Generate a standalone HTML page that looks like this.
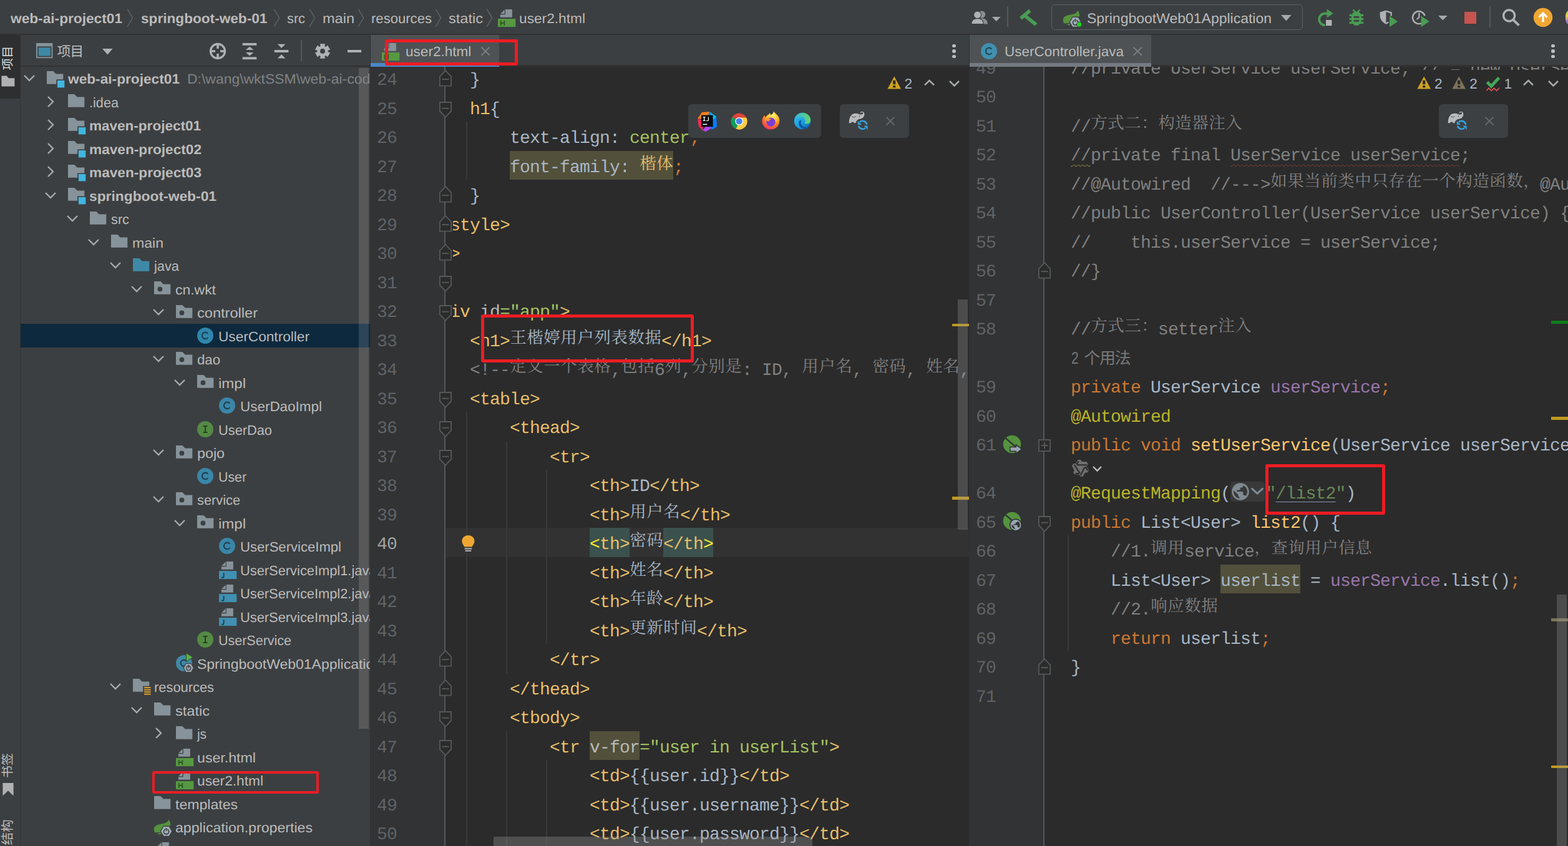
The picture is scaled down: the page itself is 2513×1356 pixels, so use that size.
<!DOCTYPE html>
<html><head><meta charset="utf-8"><title>IDE</title><style>
html,body{margin:0;padding:0;background:#3c3f41;}
body{width:2513px;height:1356px;overflow:hidden;position:relative;font-family:"Liberation Sans","Noto Sans CJK SC",sans-serif;text-rendering:geometricPrecision;}
#r{position:absolute;left:0;top:0;width:2513px;height:1356px;overflow:hidden;}
#r div{position:absolute;}
#r svg{position:absolute;overflow:visible;}
.ui{white-space:pre;line-height:30px;height:30px;transform-origin:0 50%;font-family:"Liberation Sans","Noto Sans CJK SC",sans-serif;}
.cj,.cu{display:inline-block;position:relative;vertical-align:top;letter-spacing:0;}
.cj{font-family:"Liberation Mono","Noto Serif CJK SC",serif;font-size:26.5px;line-height:45px;text-align:center;}
.cu{font-family:"Liberation Sans","Noto Sans CJK SC",sans-serif;text-align:center;}
.code{white-space:pre;font-family:"Liberation Mono","Noto Serif CJK SC",monospace;font-size:28px;letter-spacing:-0.803px;line-height:56.3px;height:46.5px;color:#a9b7c6;}
.code .cj{width:27px;height:46.5px;}
.ln{white-space:pre;font-family:"Liberation Mono",monospace;font-size:28px;letter-spacing:-0.803px;line-height:56.3px;height:46.5px;color:#606366;}
.clip{overflow:hidden;}
.hl{display:inline-block;height:46.5px;vertical-align:top;background:#52503a}
.mt{display:inline-block;height:46.5px;vertical-align:top;background:#3b514d;color:#e8bf6a}
.y{color:#ffef28}
.wy{text-decoration:underline wavy #a09a4e;text-decoration-thickness:1px;text-underline-offset:6px}
.wr{text-decoration:underline wavy #8a3a38;text-decoration-thickness:1px;text-underline-offset:6px}
.ul{text-decoration:underline;text-decoration-color:#8a93b5;text-decoration-thickness:1.3px;text-underline-offset:5px}
.inl{display:inline-block;width:56.6px;height:46.5px;vertical-align:top}
.t{color:#e8bf6a}.k{color:#cc7832}.s{color:#a5c261}.c{color:#808080}.a{color:#bbb529}.f{color:#9876aa}.m{color:#ffc66d}.n{color:#bababa}.js{color:#6a8759}
</style></head><body><div id="r">
<div style="left:0px;top:0px;width:2513px;height:1356px;background:#3c3f41;"></div>
<div style="left:0px;top:54px;width:2513px;height:2px;background:#323232;"></div>
<div style="left:0px;top:56px;width:33px;height:1300px;background:#3c3f41;"></div>
<div style="left:32px;top:56px;width:1px;height:1300px;background:#323232;"></div>
<div style="left:33px;top:105px;width:560px;height:2px;background:#2f3133;"></div>
<div style="left:33px;top:519.0px;width:560px;height:37.5px;background:#0d293e;"></div>
<div class="clip" style="left:33px;top:106px;width:560px;height:1250px;">
<div style="left:542.00px;top:3.00px;width:16px;height:1058.6px;background:rgba(255,255,255,0.135);"></div>
<svg style="left:4.00px;top:13.10px;" width="20" height="13" viewBox="0 0 20 13"><path d="M2,2 L10.0,10 L18,2" fill="none" stroke="#a9acae" stroke-width="2.3"/></svg>
<svg style="left:41.70px;top:7.70px;" width="32" height="32" viewBox="0 0 32 32"><path d="M0,0 L10.3,0 L14.6,4.4 L26.3,4.4 L26.3,20.7 L0,20.7 Z" fill="#87939a"/><rect x="15.2" y="13.4" width="14" height="14" fill="#3c3f41"/><rect x="16.9" y="15" width="11.4" height="11.4" fill="#40b6e0"/></svg>
<div id="t1" class="ui" style="left:76.00px;top:6.48px;color:#bbbbbb;font-size:22px;font-weight:bold;transform:scaleX(1.0311);">web-ai-project01</div>
<div id="t2" class="ui" style="left:267.00px;top:6.48px;color:#7f8386;font-size:22px;transform:scaleX(1.0428);">D:\wang\wktSSM\web-ai-code</div>
<svg style="left:42.00px;top:46.60px;" width="13" height="20" viewBox="0 0 13 20"><path d="M2,2 L10,10.0 L2,18" fill="none" stroke="#a9acae" stroke-width="2.3"/></svg>
<svg style="left:75.70px;top:45.20px;" width="30" height="30" viewBox="0 0 30 30"><path d="M0,0 L10.3,0 L14.6,4.4 L26.3,4.4 L26.3,20.7 L0,20.7 Z" fill="#87939a"/></svg>
<div id="t3" class="ui" style="left:110.00px;top:43.98px;color:#bbbbbb;font-size:22px;transform:scaleX(0.9849);">.idea</div>
<svg style="left:42.00px;top:84.10px;" width="13" height="20" viewBox="0 0 13 20"><path d="M2,2 L10,10.0 L2,18" fill="none" stroke="#a9acae" stroke-width="2.3"/></svg>
<svg style="left:75.70px;top:82.70px;" width="32" height="32" viewBox="0 0 32 32"><path d="M0,0 L10.3,0 L14.6,4.4 L26.3,4.4 L26.3,20.7 L0,20.7 Z" fill="#87939a"/><rect x="15.2" y="13.4" width="14" height="14" fill="#3c3f41"/><rect x="16.9" y="15" width="11.4" height="11.4" fill="#40b6e0"/></svg>
<div id="t4" class="ui" style="left:110.00px;top:81.48px;color:#bbbbbb;font-size:22px;font-weight:bold;transform:scaleX(1.0237);">maven-project01</div>
<svg style="left:42.00px;top:121.60px;" width="13" height="20" viewBox="0 0 13 20"><path d="M2,2 L10,10.0 L2,18" fill="none" stroke="#a9acae" stroke-width="2.3"/></svg>
<svg style="left:75.70px;top:120.20px;" width="32" height="32" viewBox="0 0 32 32"><path d="M0,0 L10.3,0 L14.6,4.4 L26.3,4.4 L26.3,20.7 L0,20.7 Z" fill="#87939a"/><rect x="15.2" y="13.4" width="14" height="14" fill="#3c3f41"/><rect x="16.9" y="15" width="11.4" height="11.4" fill="#40b6e0"/></svg>
<div id="t5" class="ui" style="left:110.00px;top:118.98px;color:#bbbbbb;font-size:22px;font-weight:bold;transform:scaleX(1.0294);">maven-project02</div>
<svg style="left:42.00px;top:159.10px;" width="13" height="20" viewBox="0 0 13 20"><path d="M2,2 L10,10.0 L2,18" fill="none" stroke="#a9acae" stroke-width="2.3"/></svg>
<svg style="left:75.70px;top:157.70px;" width="32" height="32" viewBox="0 0 32 32"><path d="M0,0 L10.3,0 L14.6,4.4 L26.3,4.4 L26.3,20.7 L0,20.7 Z" fill="#87939a"/><rect x="15.2" y="13.4" width="14" height="14" fill="#3c3f41"/><rect x="16.9" y="15" width="11.4" height="11.4" fill="#40b6e0"/></svg>
<div id="t6" class="ui" style="left:110.00px;top:156.48px;color:#bbbbbb;font-size:22px;font-weight:bold;transform:scaleX(1.0294);">maven-project03</div>
<svg style="left:38.00px;top:200.60px;" width="20" height="13" viewBox="0 0 20 13"><path d="M2,2 L10.0,10 L18,2" fill="none" stroke="#a9acae" stroke-width="2.3"/></svg>
<svg style="left:75.70px;top:195.20px;" width="32" height="32" viewBox="0 0 32 32"><path d="M0,0 L10.3,0 L14.6,4.4 L26.3,4.4 L26.3,20.7 L0,20.7 Z" fill="#87939a"/><rect x="15.2" y="13.4" width="14" height="14" fill="#3c3f41"/><rect x="16.9" y="15" width="11.4" height="11.4" fill="#40b6e0"/></svg>
<div id="t7" class="ui" style="left:110.00px;top:193.98px;color:#bbbbbb;font-size:22px;font-weight:bold;transform:scaleX(1.0367);">springboot-web-01</div>
<svg style="left:73.00px;top:238.10px;" width="20" height="13" viewBox="0 0 20 13"><path d="M2,2 L10.0,10 L18,2" fill="none" stroke="#a9acae" stroke-width="2.3"/></svg>
<svg style="left:110.70px;top:232.70px;" width="30" height="30" viewBox="0 0 30 30"><path d="M0,0 L10.3,0 L14.6,4.4 L26.3,4.4 L26.3,20.7 L0,20.7 Z" fill="#87939a"/></svg>
<div id="t8" class="ui" style="left:145.00px;top:231.48px;color:#bbbbbb;font-size:22px;transform:scaleX(0.9888);">src</div>
<svg style="left:107.00px;top:275.60px;" width="20" height="13" viewBox="0 0 20 13"><path d="M2,2 L10.0,10 L18,2" fill="none" stroke="#a9acae" stroke-width="2.3"/></svg>
<svg style="left:144.70px;top:270.20px;" width="30" height="30" viewBox="0 0 30 30"><path d="M0,0 L10.3,0 L14.6,4.4 L26.3,4.4 L26.3,20.7 L0,20.7 Z" fill="#87939a"/></svg>
<div id="t9" class="ui" style="left:179.00px;top:268.98px;color:#bbbbbb;font-size:22px;transform:scaleX(1.0485);">main</div>
<svg style="left:142.00px;top:313.10px;" width="20" height="13" viewBox="0 0 20 13"><path d="M2,2 L10.0,10 L18,2" fill="none" stroke="#a9acae" stroke-width="2.3"/></svg>
<svg style="left:179.70px;top:307.70px;" width="30" height="30" viewBox="0 0 30 30"><path d="M0,0 L10.3,0 L14.6,4.4 L26.3,4.4 L26.3,20.7 L0,20.7 Z" fill="#3e89a6"/></svg>
<div id="t10" class="ui" style="left:214.00px;top:306.48px;color:#bbbbbb;font-size:22px;transform:scaleX(0.9911);">java</div>
<svg style="left:176.00px;top:350.60px;" width="20" height="13" viewBox="0 0 20 13"><path d="M2,2 L10.0,10 L18,2" fill="none" stroke="#a9acae" stroke-width="2.3"/></svg>
<svg style="left:213.70px;top:345.20px;" width="30" height="30" viewBox="0 0 30 30"><path d="M0,0 L10.3,0 L14.6,4.4 L26.3,4.4 L26.3,20.7 L0,20.7 Z" fill="#87939a"/><circle cx="9.4" cy="12.4" r="3.9" fill="#3c3f41"/></svg>
<div id="t11" class="ui" style="left:248.00px;top:343.98px;color:#bbbbbb;font-size:22px;transform:scaleX(1.0423);">cn.wkt</div>
<svg style="left:211.00px;top:388.10px;" width="20" height="13" viewBox="0 0 20 13"><path d="M2,2 L10.0,10 L18,2" fill="none" stroke="#a9acae" stroke-width="2.3"/></svg>
<svg style="left:248.70px;top:382.70px;" width="30" height="30" viewBox="0 0 30 30"><path d="M0,0 L10.3,0 L14.6,4.4 L26.3,4.4 L26.3,20.7 L0,20.7 Z" fill="#87939a"/><circle cx="9.4" cy="12.4" r="3.9" fill="#3c3f41"/></svg>
<div id="t12" class="ui" style="left:283.00px;top:381.48px;color:#bbbbbb;font-size:22px;transform:scaleX(1.0720);">controller</div>
<svg style="left:281.90px;top:417.90px;" width="28" height="28" viewBox="0 0 28 28"><circle cx="14" cy="14" r="13" fill="#2f86ab"/><path d="M18.3,17.2 A5.3,5.3 0 1 1 18.3,10.6" fill="none" stroke="#1f3f4f" stroke-width="2.1"/></svg>
<div id="t13" class="ui" style="left:317.00px;top:418.98px;color:#bbbbbb;font-size:22px;transform:scaleX(1.0294);">UserController</div>
<svg style="left:211.00px;top:463.10px;" width="20" height="13" viewBox="0 0 20 13"><path d="M2,2 L10.0,10 L18,2" fill="none" stroke="#a9acae" stroke-width="2.3"/></svg>
<svg style="left:248.70px;top:457.70px;" width="30" height="30" viewBox="0 0 30 30"><path d="M0,0 L10.3,0 L14.6,4.4 L26.3,4.4 L26.3,20.7 L0,20.7 Z" fill="#87939a"/><circle cx="9.4" cy="12.4" r="3.9" fill="#3c3f41"/></svg>
<div id="t14" class="ui" style="left:283.00px;top:456.48px;color:#bbbbbb;font-size:22px;transform:scaleX(1.0077);">dao</div>
<svg style="left:245.00px;top:500.60px;" width="20" height="13" viewBox="0 0 20 13"><path d="M2,2 L10.0,10 L18,2" fill="none" stroke="#a9acae" stroke-width="2.3"/></svg>
<svg style="left:282.70px;top:495.20px;" width="30" height="30" viewBox="0 0 30 30"><path d="M0,0 L10.3,0 L14.6,4.4 L26.3,4.4 L26.3,20.7 L0,20.7 Z" fill="#87939a"/><circle cx="9.4" cy="12.4" r="3.9" fill="#3c3f41"/></svg>
<div id="t15" class="ui" style="left:317.00px;top:493.98px;color:#bbbbbb;font-size:22px;transform:scaleX(1.0906);">impl</div>
<svg style="left:316.90px;top:530.40px;" width="28" height="28" viewBox="0 0 28 28"><circle cx="14" cy="14" r="13" fill="#3a86a8"/><path d="M18.3,17.2 A5.3,5.3 0 1 1 18.3,10.6" fill="none" stroke="#1f3f4f" stroke-width="2.1"/></svg>
<div id="t16" class="ui" style="left:352.00px;top:531.48px;color:#bbbbbb;font-size:22px;transform:scaleX(1.0204);">UserDaoImpl</div>
<svg style="left:281.90px;top:567.90px;" width="28" height="28" viewBox="0 0 28 28"><circle cx="14" cy="14" r="13" fill="#548a45"/><path d="M10.6,9 H17.4 M10.6,19 H17.4 M14,9 V19" fill="none" stroke="#27421f" stroke-width="2"/></svg>
<div id="t17" class="ui" style="left:317.00px;top:568.98px;color:#bbbbbb;font-size:22px;transform:scaleX(0.9906);">UserDao</div>
<svg style="left:211.00px;top:613.10px;" width="20" height="13" viewBox="0 0 20 13"><path d="M2,2 L10.0,10 L18,2" fill="none" stroke="#a9acae" stroke-width="2.3"/></svg>
<svg style="left:248.70px;top:607.70px;" width="30" height="30" viewBox="0 0 30 30"><path d="M0,0 L10.3,0 L14.6,4.4 L26.3,4.4 L26.3,20.7 L0,20.7 Z" fill="#87939a"/><circle cx="9.4" cy="12.4" r="3.9" fill="#3c3f41"/></svg>
<div id="t18" class="ui" style="left:283.00px;top:606.48px;color:#bbbbbb;font-size:22px;transform:scaleX(1.0579);">pojo</div>
<svg style="left:281.90px;top:642.90px;" width="28" height="28" viewBox="0 0 28 28"><circle cx="14" cy="14" r="13" fill="#3a86a8"/><path d="M18.3,17.2 A5.3,5.3 0 1 1 18.3,10.6" fill="none" stroke="#1f3f4f" stroke-width="2.1"/></svg>
<div id="t19" class="ui" style="left:317.00px;top:643.98px;color:#bbbbbb;font-size:22px;transform:scaleX(0.9687);">User</div>
<svg style="left:211.00px;top:688.10px;" width="20" height="13" viewBox="0 0 20 13"><path d="M2,2 L10.0,10 L18,2" fill="none" stroke="#a9acae" stroke-width="2.3"/></svg>
<svg style="left:248.70px;top:682.70px;" width="30" height="30" viewBox="0 0 30 30"><path d="M0,0 L10.3,0 L14.6,4.4 L26.3,4.4 L26.3,20.7 L0,20.7 Z" fill="#87939a"/><circle cx="9.4" cy="12.4" r="3.9" fill="#3c3f41"/></svg>
<div id="t20" class="ui" style="left:283.00px;top:681.48px;color:#bbbbbb;font-size:22px;transform:scaleX(0.9901);">service</div>
<svg style="left:245.00px;top:725.60px;" width="20" height="13" viewBox="0 0 20 13"><path d="M2,2 L10.0,10 L18,2" fill="none" stroke="#a9acae" stroke-width="2.3"/></svg>
<svg style="left:282.70px;top:720.20px;" width="30" height="30" viewBox="0 0 30 30"><path d="M0,0 L10.3,0 L14.6,4.4 L26.3,4.4 L26.3,20.7 L0,20.7 Z" fill="#87939a"/><circle cx="9.4" cy="12.4" r="3.9" fill="#3c3f41"/></svg>
<div id="t21" class="ui" style="left:317.00px;top:718.98px;color:#bbbbbb;font-size:22px;transform:scaleX(1.0906);">impl</div>
<svg style="left:316.90px;top:755.40px;" width="28" height="28" viewBox="0 0 28 28"><circle cx="14" cy="14" r="13" fill="#3a86a8"/><path d="M18.3,17.2 A5.3,5.3 0 1 1 18.3,10.6" fill="none" stroke="#1f3f4f" stroke-width="2.1"/></svg>
<div id="t22" class="ui" style="left:352.00px;top:756.48px;color:#bbbbbb;font-size:22px;transform:scaleX(1.0039);">UserServiceImpl</div>
<svg style="left:318.10px;top:793.60px;" width="30" height="30" viewBox="0 0 30 30"><path d="M11.8,0 H22.8 V12.8 H3.8 V8.3 H11.8 Z" fill="#87939a"/><path d="M4.1,7 L10.6,0.5 V7 Z" fill="#87939a"/><rect x="0" y="15.1" width="28.3" height="13" fill="#4090b2"/><path d="M7.6,18.3 V23.6 Q7.6,26 5.6,26 Q4.5,26 4.1,25.2" fill="none" stroke="#1d3f4f" stroke-width="1.9"/></svg>
<div id="t23" class="ui" style="left:352.00px;top:793.98px;color:#bbbbbb;font-size:22px;transform:scaleX(0.9928);">UserServiceImpl1.java</div>
<svg style="left:318.10px;top:831.10px;" width="30" height="30" viewBox="0 0 30 30"><path d="M11.8,0 H22.8 V12.8 H3.8 V8.3 H11.8 Z" fill="#87939a"/><path d="M4.1,7 L10.6,0.5 V7 Z" fill="#87939a"/><rect x="0" y="15.1" width="28.3" height="13" fill="#4090b2"/><path d="M7.6,18.3 V23.6 Q7.6,26 5.6,26 Q4.5,26 4.1,25.2" fill="none" stroke="#1d3f4f" stroke-width="1.9"/></svg>
<div id="t24" class="ui" style="left:352.00px;top:831.48px;color:#bbbbbb;font-size:22px;transform:scaleX(0.9928);">UserServiceImpl2.java</div>
<svg style="left:318.10px;top:868.60px;" width="30" height="30" viewBox="0 0 30 30"><path d="M11.8,0 H22.8 V12.8 H3.8 V8.3 H11.8 Z" fill="#87939a"/><path d="M4.1,7 L10.6,0.5 V7 Z" fill="#87939a"/><rect x="0" y="15.1" width="28.3" height="13" fill="#4090b2"/><path d="M7.6,18.3 V23.6 Q7.6,26 5.6,26 Q4.5,26 4.1,25.2" fill="none" stroke="#1d3f4f" stroke-width="1.9"/></svg>
<div id="t25" class="ui" style="left:352.00px;top:868.98px;color:#bbbbbb;font-size:22px;transform:scaleX(0.9928);">UserServiceImpl3.java</div>
<svg style="left:281.90px;top:905.40px;" width="28" height="28" viewBox="0 0 28 28"><circle cx="14" cy="14" r="13" fill="#548a45"/><path d="M10.6,9 H17.4 M10.6,19 H17.4 M14,9 V19" fill="none" stroke="#27421f" stroke-width="2"/></svg>
<div id="t26" class="ui" style="left:317.00px;top:906.48px;color:#bbbbbb;font-size:22px;transform:scaleX(0.9765);">UserService</div>
<svg style="left:246.10px;top:939.20px;" width="40" height="40" viewBox="0 0 40 40"><circle cx="16" cy="18" r="13" fill="#3f89a8"/><path d="M19.5,21 A5,5 0 1 1 19.5,14.6" fill="none" stroke="#1f3f4f" stroke-width="2"/><path d="M19.4,1.6 L30.2,8.6 L19.4,15.4 Z" fill="#59b33c" stroke="#3c3f41" stroke-width="1"/><polygon points="31.4,25.6 27.3,32.7 19.1,32.7 15.0,25.6 19.1,18.5 27.3,18.5" fill="#9aa7b0" stroke="#3c3f41" stroke-width="1.2"/><circle cx="23.2" cy="26.0" r="3.4" fill="none" stroke="#3c3f41" stroke-width="1.5"/><rect x="22.4" y="20.5" width="1.6" height="4.9" fill="#3c3f41"/></svg>
<div id="t27" class="ui" style="left:283.00px;top:943.98px;color:#bbbbbb;font-size:22px;transform:scaleX(1.0446);">SpringbootWeb01Application</div>
<svg style="left:142.00px;top:988.10px;" width="20" height="13" viewBox="0 0 20 13"><path d="M2,2 L10.0,10 L18,2" fill="none" stroke="#a9acae" stroke-width="2.3"/></svg>
<svg style="left:179.70px;top:981.70px;" width="32" height="32" viewBox="0 0 32 32"><path d="M0,0 L10.3,0 L14.6,4.4 L26.3,4.4 L26.3,20.7 L0,20.7 Z" fill="#87939a"/><rect x="16.2" y="11.6" width="14" height="16" fill="#3c3f41"/><rect x="18" y="13.2" width="10.6" height="1.9" fill="#e2a52e"/><rect x="18" y="16.7" width="10.6" height="1.9" fill="#e2a52e"/><rect x="18" y="20.2" width="10.6" height="1.9" fill="#e2a52e"/><rect x="18" y="23.7" width="10.6" height="1.9" fill="#e2a52e"/></svg>
<div id="t28" class="ui" style="left:214.00px;top:981.48px;color:#bbbbbb;font-size:22px;transform:scaleX(0.9939);">resources</div>
<svg style="left:176.00px;top:1025.60px;" width="20" height="13" viewBox="0 0 20 13"><path d="M2,2 L10.0,10 L18,2" fill="none" stroke="#a9acae" stroke-width="2.3"/></svg>
<svg style="left:213.70px;top:1020.20px;" width="30" height="30" viewBox="0 0 30 30"><path d="M0,0 L10.3,0 L14.6,4.4 L26.3,4.4 L26.3,20.7 L0,20.7 Z" fill="#87939a"/></svg>
<div id="t29" class="ui" style="left:248.00px;top:1018.98px;color:#bbbbbb;font-size:22px;transform:scaleX(1.0709);">static</div>
<svg style="left:215.00px;top:1059.10px;" width="13" height="20" viewBox="0 0 13 20"><path d="M2,2 L10,10.0 L2,18" fill="none" stroke="#a9acae" stroke-width="2.3"/></svg>
<svg style="left:248.70px;top:1057.70px;" width="30" height="30" viewBox="0 0 30 30"><path d="M0,0 L10.3,0 L14.6,4.4 L26.3,4.4 L26.3,20.7 L0,20.7 Z" fill="#87939a"/></svg>
<div id="t30" class="ui" style="left:283.00px;top:1056.48px;color:#bbbbbb;font-size:22px;transform:scaleX(0.9440);">js</div>
<svg style="left:249.10px;top:1093.60px;" width="30" height="30" viewBox="0 0 30 30"><path d="M11.8,0 H22.8 V12.8 H3.8 V8.3 H11.8 Z" fill="#87939a"/><path d="M4.1,7 L10.6,0.5 V7 Z" fill="#87939a"/><rect x="0" y="15.1" width="28.3" height="13" fill="#579943"/><path d="M4.7,18 V26 M10.3,18 V26 M4.7,21.9 H10.3" fill="none" stroke="#2a5520" stroke-width="1.8"/></svg>
<div id="t31" class="ui" style="left:283.00px;top:1093.98px;color:#bbbbbb;font-size:22px;transform:scaleX(1.0530);">user.html</div>
<svg style="left:249.10px;top:1131.10px;" width="30" height="30" viewBox="0 0 30 30"><path d="M11.8,0 H22.8 V12.8 H3.8 V8.3 H11.8 Z" fill="#87939a"/><path d="M4.1,7 L10.6,0.5 V7 Z" fill="#87939a"/><rect x="0" y="15.1" width="28.3" height="13" fill="#579943"/><path d="M4.7,18 V26 M10.3,18 V26 M4.7,21.9 H10.3" fill="none" stroke="#2a5520" stroke-width="1.8"/></svg>
<div id="t32" class="ui" style="left:283.00px;top:1131.48px;color:#bbbbbb;font-size:22px;transform:scaleX(1.0319);">user2.html</div>
<svg style="left:213.70px;top:1170.20px;" width="30" height="30" viewBox="0 0 30 30"><path d="M0,0 L10.3,0 L14.6,4.4 L26.3,4.4 L26.3,20.7 L0,20.7 Z" fill="#87939a"/></svg>
<div id="t33" class="ui" style="left:248.00px;top:1168.98px;color:#bbbbbb;font-size:22px;transform:scaleX(1.0483);">templates</div>
<svg style="left:213.00px;top:1204.00px;" width="32" height="32" viewBox="0 0 32 32"><path d="M24.5,3.8 C22.5,7.5 20,9.6 13.6,10.6 C8,11.4 0.8,13 0.8,18.8 C0.8,21.4 1.4,23.2 2.6,24.6 L10.6,23.9 L18,14 L27.2,13.6 C27.4,9.4 26,6 24.5,3.8 Z" fill="#55933e"/><path d="M5.8,26.5 C8,25.6 10.4,24.9 12.4,24.7 L12.4,27 C10,27.3 8,27.1 5.8,26.5 Z" fill="#55933e"/><polygon points="29.08,22.44 24.81,29.84 16.26,29.84 11.98,22.44 16.25,15.04 24.81,15.04" fill="#a0acb6" stroke="#3c3f41" stroke-width="2.6" paint-order="stroke" stroke-linejoin="round"/><circle cx="20.53" cy="23.040000000000003" r="4.02" fill="none" stroke="#2f3133" stroke-width="1.5"/><rect x="18.93" y="16.80" width="3.2" height="5.30" fill="#a0acb6"/><rect x="19.78" y="17.14" width="1.5" height="4.79" fill="#2f3133"/></svg>
<div id="t34" class="ui" style="left:248.00px;top:1206.48px;color:#bbbbbb;font-size:22px;transform:scaleX(1.0519);">application.properties</div>
<svg style="left:214.70px;top:1243.60px;" width="30" height="30" viewBox="0 0 30 30"><path d="M11.8,0 H22.8 V12.8 H3.8 V8.3 H11.8 Z" fill="#87939a"/><path d="M4.1,7 L10.6,0.5 V7 Z" fill="#87939a"/><rect x="0" y="15.1" width="28.3" height="13" fill="#4090b2"/><path d="M7.6,18.3 V23.6 Q7.6,26 5.6,26 Q4.5,26 4.1,25.2" fill="none" stroke="#1d3f4f" stroke-width="1.9"/></svg>
</div>
<div style="left:592.8px;top:56px;width:1.2px;height:1300px;background:#2f3133;"></div>
<div style="left:594px;top:56px;width:959px;height:48px;background:#3c3f41;"></div>
<div style="left:594px;top:104.4px;width:959px;height:2.6px;background:#323232;"></div>
<div style="left:594px;top:56px;width:206.2px;height:51px;background:#4e5254;"></div>
<div style="left:594px;top:100.8px;width:206.2px;height:6.2px;background:#4a88c7;"></div>
<svg style="left:611.8px;top:68.9px;" width="30" height="30" viewBox="0 0 30 30"><path d="M11.8,0 H22.8 V12.8 H3.8 V8.3 H11.8 Z" fill="#87939a"/><path d="M4.1,7 L10.6,0.5 V7 Z" fill="#87939a"/><rect x="0" y="15.1" width="28.3" height="13" fill="#579943"/><path d="M4.7,18 V26 M10.3,18 V26 M4.7,21.9 H10.3" fill="none" stroke="#2a5520" stroke-width="1.8"/></svg>
<div id="t35" class="ui" style="left:649.6px;top:68.18px;color:#bbbbbb;font-size:22px;transform:scaleX(1.0261);">user2.html</div>
<svg style="left:770px;top:74.3px;" width="16" height="16" viewBox="0 0 16 16"><path d="M1.6,1.6 L14.6,14.6 M14.6,1.6 L1.6,14.6" stroke="#7f8486" stroke-width="1.7" fill="none"/></svg>
<div style="left:1526.1px;top:70.69999999999999px;width:5.8px;height:5.8px;background:#bdbfc0;border-radius:50%;"></div>
<div style="left:1526.1px;top:79.1px;width:5.8px;height:5.8px;background:#bdbfc0;border-radius:50%;"></div>
<div style="left:1526.1px;top:87.5px;width:5.8px;height:5.8px;background:#bdbfc0;border-radius:50%;"></div>
<div style="left:594px;top:107px;width:119px;height:1249px;background:#313335;"></div>
<div style="left:713px;top:107px;width:840px;height:1249px;background:#2b2b2b;"></div>
<div style="left:713px;top:846.0px;width:840px;height:46.5px;background:#323232;"></div>
<div class="clip" style="left:594px;top:107px;width:959px;height:1249px;">
<div class="ln" style="left:10.00px;top:-5.00px;color:#606366;">24</div>
<div class="ln" style="left:10.00px;top:41.50px;color:#606366;">25</div>
<div class="ln" style="left:10.00px;top:88.00px;color:#606366;">26</div>
<div class="ln" style="left:10.00px;top:134.50px;color:#606366;">27</div>
<div class="ln" style="left:10.00px;top:181.00px;color:#606366;">28</div>
<div class="ln" style="left:10.00px;top:227.50px;color:#606366;">29</div>
<div class="ln" style="left:10.00px;top:274.00px;color:#606366;">30</div>
<div class="ln" style="left:10.00px;top:320.50px;color:#606366;">31</div>
<div class="ln" style="left:10.00px;top:367.00px;color:#606366;">32</div>
<div class="ln" style="left:10.00px;top:413.50px;color:#606366;">33</div>
<div class="ln" style="left:10.00px;top:460.00px;color:#606366;">34</div>
<div class="ln" style="left:10.00px;top:506.50px;color:#606366;">35</div>
<div class="ln" style="left:10.00px;top:553.00px;color:#606366;">36</div>
<div class="ln" style="left:10.00px;top:599.50px;color:#606366;">37</div>
<div class="ln" style="left:10.00px;top:646.00px;color:#606366;">38</div>
<div class="ln" style="left:10.00px;top:692.50px;color:#606366;">39</div>
<div class="ln" style="left:10.00px;top:739.00px;color:#a4a3a3;">40</div>
<div class="ln" style="left:10.00px;top:785.50px;color:#606366;">41</div>
<div class="ln" style="left:10.00px;top:832.00px;color:#606366;">42</div>
<div class="ln" style="left:10.00px;top:878.50px;color:#606366;">43</div>
<div class="ln" style="left:10.00px;top:925.00px;color:#606366;">44</div>
<div class="ln" style="left:10.00px;top:971.50px;color:#606366;">45</div>
<div class="ln" style="left:10.00px;top:1018.00px;color:#606366;">46</div>
<div class="ln" style="left:10.00px;top:1064.50px;color:#606366;">47</div>
<div class="ln" style="left:10.00px;top:1111.00px;color:#606366;">48</div>
<div class="ln" style="left:10.00px;top:1157.50px;color:#606366;">49</div>
<div class="ln" style="left:10.00px;top:1204.00px;color:#606366;">50</div>
<div style="left:118.00px;top:0.00px;width:2px;height:1249px;background:#555758;"></div>
<svg style="left:109.30px;top:5.20px;" width="22" height="27" viewBox="0 0 22 27"><path d="M1.9,25.6 H20.1 V10.6 L11,1.2 L1.9,10.6 Z" fill="#2b2b2b" stroke="#555758" stroke-width="1.9"/><rect x="5.4" y="14.1" width="11.2" height="2" fill="#555758"/></svg>
<svg style="left:109.30px;top:191.20px;" width="22" height="27" viewBox="0 0 22 27"><path d="M1.9,25.6 H20.1 V10.6 L11,1.2 L1.9,10.6 Z" fill="#2b2b2b" stroke="#555758" stroke-width="1.9"/><rect x="5.4" y="14.1" width="11.2" height="2" fill="#555758"/></svg>
<svg style="left:109.30px;top:237.70px;" width="22" height="27" viewBox="0 0 22 27"><path d="M1.9,25.6 H20.1 V10.6 L11,1.2 L1.9,10.6 Z" fill="#2b2b2b" stroke="#555758" stroke-width="1.9"/><rect x="5.4" y="14.1" width="11.2" height="2" fill="#555758"/></svg>
<svg style="left:109.30px;top:284.20px;" width="22" height="27" viewBox="0 0 22 27"><path d="M1.9,25.6 H20.1 V10.6 L11,1.2 L1.9,10.6 Z" fill="#2b2b2b" stroke="#555758" stroke-width="1.9"/><rect x="5.4" y="14.1" width="11.2" height="2" fill="#555758"/></svg>
<svg style="left:109.30px;top:935.20px;" width="22" height="27" viewBox="0 0 22 27"><path d="M1.9,25.6 H20.1 V10.6 L11,1.2 L1.9,10.6 Z" fill="#2b2b2b" stroke="#555758" stroke-width="1.9"/><rect x="5.4" y="14.1" width="11.2" height="2" fill="#555758"/></svg>
<svg style="left:109.30px;top:981.70px;" width="22" height="27" viewBox="0 0 22 27"><path d="M1.9,25.6 H20.1 V10.6 L11,1.2 L1.9,10.6 Z" fill="#2b2b2b" stroke="#555758" stroke-width="1.9"/><rect x="5.4" y="14.1" width="11.2" height="2" fill="#555758"/></svg>
<svg style="left:109.30px;top:56.20px;" width="22" height="27" viewBox="0 0 22 27"><path d="M1.9,1 H20.1 V15 L11,24.6 L1.9,15 Z" fill="#2b2b2b" stroke="#555758" stroke-width="1.9"/><rect x="5.4" y="9.7" width="11.2" height="2" fill="#555758"/></svg>
<svg style="left:109.30px;top:335.20px;" width="22" height="27" viewBox="0 0 22 27"><path d="M1.9,1 H20.1 V15 L11,24.6 L1.9,15 Z" fill="#2b2b2b" stroke="#555758" stroke-width="1.9"/><rect x="5.4" y="9.7" width="11.2" height="2" fill="#555758"/></svg>
<svg style="left:109.30px;top:381.70px;" width="22" height="27" viewBox="0 0 22 27"><path d="M1.9,1 H20.1 V15 L11,24.6 L1.9,15 Z" fill="#2b2b2b" stroke="#555758" stroke-width="1.9"/><rect x="5.4" y="9.7" width="11.2" height="2" fill="#555758"/></svg>
<svg style="left:109.30px;top:521.20px;" width="22" height="27" viewBox="0 0 22 27"><path d="M1.9,1 H20.1 V15 L11,24.6 L1.9,15 Z" fill="#2b2b2b" stroke="#555758" stroke-width="1.9"/><rect x="5.4" y="9.7" width="11.2" height="2" fill="#555758"/></svg>
<svg style="left:109.30px;top:567.70px;" width="22" height="27" viewBox="0 0 22 27"><path d="M1.9,1 H20.1 V15 L11,24.6 L1.9,15 Z" fill="#2b2b2b" stroke="#555758" stroke-width="1.9"/><rect x="5.4" y="9.7" width="11.2" height="2" fill="#555758"/></svg>
<svg style="left:109.30px;top:614.20px;" width="22" height="27" viewBox="0 0 22 27"><path d="M1.9,1 H20.1 V15 L11,24.6 L1.9,15 Z" fill="#2b2b2b" stroke="#555758" stroke-width="1.9"/><rect x="5.4" y="9.7" width="11.2" height="2" fill="#555758"/></svg>
<svg style="left:109.30px;top:1032.70px;" width="22" height="27" viewBox="0 0 22 27"><path d="M1.9,1 H20.1 V15 L11,24.6 L1.9,15 Z" fill="#2b2b2b" stroke="#555758" stroke-width="1.9"/><rect x="5.4" y="9.7" width="11.2" height="2" fill="#555758"/></svg>
<svg style="left:109.30px;top:1079.20px;" width="22" height="27" viewBox="0 0 22 27"><path d="M1.9,1 H20.1 V15 L11,24.6 L1.9,15 Z" fill="#2b2b2b" stroke="#555758" stroke-width="1.9"/><rect x="5.4" y="9.7" width="11.2" height="2" fill="#555758"/></svg>
<div style="left:153.40px;top:88.00px;width:1.6px;height:93.0px;background:#393939;"></div>
<div style="left:153.40px;top:553.00px;width:1.6px;height:697.5px;background:#393939;"></div>
<div style="left:217.40px;top:599.50px;width:1.6px;height:372.0px;background:#393939;"></div>
<div style="left:281.40px;top:646.00px;width:1.6px;height:279.0px;background:#393939;"></div>
<div style="left:217.40px;top:1064.50px;width:1.6px;height:186.0px;background:#393939;"></div>
<div style="left:281.40px;top:1111.00px;width:1.6px;height:139.5px;background:#393939;"></div>
<div class="clip" style="left:131.60px;top:0.00px;width:827.4px;height:1249px;">
<div class="code" style="left:27.40px;top:-5.00px;">}</div>
<div class="code" style="left:27.40px;top:41.50px;"><span class="t">h1</span>{</div>
<div class="code" style="left:91.40px;top:88.00px;">text-align: <span class="s">center</span><span class="k">;</span></div>
<div class="code" style="left:91.40px;top:134.50px;"><span class="hl">font-family: <span class="t"><span class="cj">楷</span><span class="cj">体</span></span></span><span class="k">;</span></div>
<div class="code" style="left:27.40px;top:181.00px;">}</div>
<div class="code" style="left:-36.60px;top:227.50px;"><span class="t">&lt;/style&gt;</span></div>
<div class="code" style="left:-100.60px;top:274.00px;"><span class="t">&lt;/head&gt;</span></div>
<div class="code" style="left:-100.60px;top:320.50px;"><span class="t">&lt;body&gt;</span></div>
<div class="code" style="left:-36.60px;top:367.00px;"><span class="t">&lt;div </span><span class="n">id</span><span class="s">=&quot;app&quot;</span><span class="t">&gt;</span></div>
<div class="code" style="left:27.40px;top:413.50px;"><span class="t">&lt;h1&gt;</span><span class="cj">王</span><span class="cj">楷</span><span class="cj">婷</span><span class="cj">用</span><span class="cj">户</span><span class="cj">列</span><span class="cj">表</span><span class="cj">数</span><span class="cj">据</span><span class="t">&lt;/h1&gt;</span></div>
<div class="code" style="left:27.40px;top:460.00px;"><span class="c">&lt;!--<span class="cj">定</span><span class="cj">义</span><span class="cj">一</span><span class="cj">个</span><span class="cj">表</span><span class="cj">格</span>,<span class="cj">包</span><span class="cj">括</span>6<span class="cj">列</span>,<span class="cj">分</span><span class="cj">别</span><span class="cj">是</span>: ID, <span class="cj">用</span><span class="cj">户</span><span class="cj">名</span>, <span class="cj">密</span><span class="cj">码</span>, <span class="cj">姓</span><span class="cj">名</span>, <span class="cj">年</span><span class="cj">龄</span>, <span class="cj">更</span><span class="cj">新</span><span class="cj">时</span><span class="cj">间</span>--&gt;</span></div>
<div class="code" style="left:27.40px;top:506.50px;"><span class="t">&lt;table&gt;</span></div>
<div class="code" style="left:91.40px;top:553.00px;"><span class="t">&lt;thead&gt;</span></div>
<div class="code" style="left:155.40px;top:599.50px;"><span class="t">&lt;tr&gt;</span></div>
<div class="code" style="left:219.40px;top:646.00px;"><span class="t">&lt;th&gt;</span>ID<span class="t">&lt;/th&gt;</span></div>
<div class="code" style="left:219.40px;top:692.50px;"><span class="t">&lt;th&gt;</span><span class="cj">用</span><span class="cj">户</span><span class="cj">名</span><span class="t">&lt;/th&gt;</span></div>
<div class="code" style="left:219.40px;top:739.00px;"><span class="mt"><span class="y">&lt;</span>th&gt;</span><span class="cj">密</span><span class="cj">码</span><span class="mt">&lt;/th<span class="y">&gt;</span></span></div>
<div class="code" style="left:219.40px;top:785.50px;"><span class="t">&lt;th&gt;</span><span class="cj">姓</span><span class="cj">名</span><span class="t">&lt;/th&gt;</span></div>
<div class="code" style="left:219.40px;top:832.00px;"><span class="t">&lt;th&gt;</span><span class="cj">年</span><span class="cj">龄</span><span class="t">&lt;/th&gt;</span></div>
<div class="code" style="left:219.40px;top:878.50px;"><span class="t">&lt;th&gt;</span><span class="cj">更</span><span class="cj">新</span><span class="cj">时</span><span class="cj">间</span><span class="t">&lt;/th&gt;</span></div>
<div class="code" style="left:155.40px;top:925.00px;"><span class="t">&lt;/tr&gt;</span></div>
<div class="code" style="left:91.40px;top:971.50px;"><span class="t">&lt;/thead&gt;</span></div>
<div class="code" style="left:91.40px;top:1018.00px;"><span class="t">&lt;tbody&gt;</span></div>
<div class="code" style="left:155.40px;top:1064.50px;"><span class="t">&lt;tr </span><span class="hl"><span class="n">v-for</span></span><span class="s">=&quot;user in userList&quot;</span><span class="t">&gt;</span></div>
<div class="code" style="left:219.40px;top:1111.00px;"><span class="t">&lt;td&gt;</span>{{user.id}}<span class="t">&lt;/td&gt;</span></div>
<div class="code" style="left:219.40px;top:1157.50px;"><span class="t">&lt;td&gt;</span>{{user.username}}<span class="t">&lt;/td&gt;</span></div>
<div class="code" style="left:219.40px;top:1204.00px;"><span class="t">&lt;td&gt;</span>{{user.password}}<span class="t">&lt;/td&gt;</span></div>
</div>
<svg style="left:144.00px;top:750.00px;" width="26" height="30" viewBox="0 0 26 30"><path d="M12.4,1 C18.6,1 22.4,5.4 22.4,10.4 C22.4,14.4 19.6,16.4 18.6,19.6 H6.2 C5.2,16.4 2.4,14.4 2.4,10.4 C2.4,5.4 6.2,1 12.4,1 Z" fill="#f0a732"/><rect x="6.6" y="21.4" width="11.6" height="2" fill="#b4b6b8"/><rect x="7.6" y="24.8" width="9.6" height="2" fill="#b4b6b8"/></svg>
</div>
<div style="left:1526px;top:518.5px;width:26.6px;height:4.5px;background:#c29a1d;"></div>
<div style="left:1526px;top:796px;width:26.6px;height:4.5px;background:#c29a1d;"></div>
<div style="left:1535px;top:480px;width:16px;height:369px;background:rgba(160,160,160,0.29);"></div>
<div style="left:791px;top:1341px;width:511px;height:15px;background:rgba(150,150,150,0.34);"></div>
<div style="left:1552.7px;top:56px;width:1.3px;height:1300px;background:#2f3133;"></div>
<div style="left:1554px;top:56px;width:959px;height:48px;background:#3c3f41;"></div>
<div style="left:1554px;top:104.4px;width:959px;height:2.6px;background:#323232;"></div>
<div style="left:1554px;top:56px;width:291px;height:51px;background:#4e5254;"></div>
<div style="left:1554px;top:101px;width:291px;height:6px;background:#757a82;"></div>
<svg style="left:1571px;top:68px;" width="28" height="28" viewBox="0 0 28 28"><circle cx="14" cy="14" r="13" fill="#4090ae"/><path d="M18.3,17.2 A5.3,5.3 0 1 1 18.3,10.6" fill="none" stroke="#1f4656" stroke-width="2.1"/></svg>
<div id="t36" class="ui" style="left:1610.4px;top:68.28px;color:#bbbbbb;font-size:22px;transform:scaleX(1.0210);">UserController.java</div>
<svg style="left:1815px;top:74px;" width="16" height="16" viewBox="0 0 16 16"><path d="M1.6,1.6 L14.8,14.8 M14.8,1.6 L1.6,14.8" stroke="#7f8486" stroke-width="1.7" fill="none"/></svg>
<div style="left:2486.3px;top:70.69999999999999px;width:5.8px;height:5.8px;background:#bdbfc0;border-radius:50%;"></div>
<div style="left:2486.3px;top:79.1px;width:5.8px;height:5.8px;background:#bdbfc0;border-radius:50%;"></div>
<div style="left:2486.3px;top:87.5px;width:5.8px;height:5.8px;background:#bdbfc0;border-radius:50%;"></div>
<div style="left:1554px;top:107px;width:119px;height:1249px;background:#313335;"></div>
<div style="left:1673px;top:107px;width:840px;height:1249px;background:#2b2b2b;"></div>
<div class="clip" style="left:1554px;top:107px;width:959px;height:1249px;">
<div class="ln" style="left:10.00px;top:-23.20px;">49</div>
<div class="ln" style="left:10.00px;top:23.30px;">50</div>
<div class="ln" style="left:10.00px;top:69.80px;">51</div>
<div class="ln" style="left:10.00px;top:116.30px;">52</div>
<div class="ln" style="left:10.00px;top:162.80px;">53</div>
<div class="ln" style="left:10.00px;top:209.30px;">54</div>
<div class="ln" style="left:10.00px;top:255.80px;">55</div>
<div class="ln" style="left:10.00px;top:302.30px;">56</div>
<div class="ln" style="left:10.00px;top:348.80px;">57</div>
<div class="ln" style="left:10.00px;top:395.30px;">58</div>
<div class="ln" style="left:10.00px;top:488.30px;">59</div>
<div class="ln" style="left:10.00px;top:534.80px;">60</div>
<div class="ln" style="left:10.00px;top:581.30px;">61</div>
<div class="ln" style="left:10.00px;top:658.30px;">64</div>
<div class="ln" style="left:10.00px;top:704.80px;">65</div>
<div class="ln" style="left:10.00px;top:751.30px;">66</div>
<div class="ln" style="left:10.00px;top:797.80px;">67</div>
<div class="ln" style="left:10.00px;top:844.30px;">68</div>
<div class="ln" style="left:10.00px;top:890.80px;">69</div>
<div class="ln" style="left:10.00px;top:937.30px;">70</div>
<div class="ln" style="left:10.00px;top:983.80px;">71</div>
<div style="left:118.00px;top:0.00px;width:2px;height:1249px;background:#555758;"></div>
<svg style="left:109.20px;top:312.50px;" width="22" height="27" viewBox="0 0 22 27"><path d="M1.9,25.6 H20.1 V10.6 L11,1.2 L1.9,10.6 Z" fill="#2b2b2b" stroke="#555758" stroke-width="1.9"/><rect x="5.4" y="14.1" width="11.2" height="2" fill="#555758"/></svg>
<svg style="left:110.20px;top:596.80px;" width="20" height="20" viewBox="0 0 20 20"><rect x="1" y="1" width="18" height="18" fill="#2b2b2b" stroke="#555758" stroke-width="1.9"/><rect x="4.6" y="9" width="10.8" height="2" fill="#555758"/><rect x="9" y="4.6" width="2" height="10.8" fill="#555758"/></svg>
<svg style="left:109.20px;top:719.50px;" width="22" height="27" viewBox="0 0 22 27"><path d="M1.9,1 H20.1 V15 L11,24.6 L1.9,15 Z" fill="#2b2b2b" stroke="#555758" stroke-width="1.9"/><rect x="5.4" y="9.7" width="11.2" height="2" fill="#555758"/></svg>
<svg style="left:109.20px;top:947.50px;" width="22" height="27" viewBox="0 0 22 27"><path d="M1.9,25.6 H20.1 V10.6 L11,1.2 L1.9,10.6 Z" fill="#2b2b2b" stroke="#555758" stroke-width="1.9"/><rect x="5.4" y="14.1" width="11.2" height="2" fill="#555758"/></svg>
<div style="left:157.40px;top:751.30px;width:1.6px;height:186.0px;background:#393939;"></div>
<div class="code" style="left:162.00px;top:-23.20px;"><span class="c">//private UserService userService; // = new UserServiceImpl();</span></div>
<div class="code" style="left:162.00px;top:69.80px;"><span class="c">//<span class="cj">方</span><span class="cj">式</span><span class="cj">二</span><span class="cj">：</span><span class="cj">构</span><span class="cj">造</span><span class="cj">器</span><span class="cj">注</span><span class="cj">入</span></span></div>
<div class="code" style="left:162.00px;top:116.30px;"><span class="c"><span class="wy">//</span>private final <span class="wr">UserService userService</span>;</span></div>
<div class="code" style="left:162.00px;top:162.80px;"><span class="c">//@Autowired  //---&gt;<span class="cj">如</span><span class="cj">果</span><span class="cj">当</span><span class="cj">前</span><span class="cj">类</span><span class="cj">中</span><span class="cj">只</span><span class="cj">存</span><span class="cj">在</span><span class="cj">一</span><span class="cj">个</span><span class="cj">构</span><span class="cj">造</span><span class="cj">函</span><span class="cj">数</span><span class="cj">，</span>@Autowired</span></div>
<div class="code" style="left:162.00px;top:209.30px;"><span class="c">//public UserController(UserService userService) {</span></div>
<div class="code" style="left:162.00px;top:255.80px;"><span class="c">//    this.userService = userService;</span></div>
<div class="code" style="left:162.00px;top:302.30px;"><span class="c">//}</span></div>
<div class="code" style="left:162.00px;top:395.30px;"><span class="c">//<span class="cj">方</span><span class="cj">式</span><span class="cj">三</span><span class="cj">：</span>setter<span class="cj">注</span><span class="cj">入</span></span></div>
<div class="code" style="left:162.00px;top:488.30px;"><span class="k">private</span> UserService <span class="f">userService</span><span class="k">;</span></div>
<div class="code" style="left:162.00px;top:534.80px;"><span class="a">@Autowired</span></div>
<div class="code" style="left:162.00px;top:581.30px;"><span class="k">public void</span> <span class="m">setUserService</span>(UserService userService) { this.userService</div>
<div class="code" style="left:162.00px;top:658.30px;"><span class="a">@RequestMapping</span>(<span class="inl"></span><span class="js">&quot;<span class="ul">/list2</span>&quot;</span>)</div>
<div class="code" style="left:162.00px;top:704.80px;"><span class="k">public</span> List&lt;User&gt; <span class="m">list2</span>() {</div>
<div class="code" style="left:226.00px;top:751.30px;"><span class="c">//1.<span class="cj">调</span><span class="cj">用</span>service<span class="cj">，</span><span class="cj">查</span><span class="cj">询</span><span class="cj">用</span><span class="cj">户</span><span class="cj">信</span><span class="cj">息</span></span></div>
<div class="code" style="left:226.00px;top:797.80px;">List&lt;User&gt; <span class="hl">userlist</span> = <span class="f">userService</span>.list()<span class="k">;</span></div>
<div class="code" style="left:226.00px;top:844.30px;"><span class="c">//2.<span class="cj">响</span><span class="cj">应</span><span class="cj">数</span><span class="cj">据</span></span></div>
<div class="code" style="left:226.00px;top:890.80px;"><span class="k">return</span> userlist<span class="k">;</span></div>
<div class="code" style="left:162.00px;top:937.30px;">}</div>
<div id="t37" class="ui" style="left:162.60px;top:452.14px;color:#787878;font-size:27px;transform:scaleX(0.7717);">2</div>
<div id="t38" class="ui" style="left:183.20px;top:452.49px;color:#787878;font-size:26px;"><span class="cu" style="width:24.7px;height:30px">个</span><span class="cu" style="width:24.7px;height:30px">用</span><span class="cu" style="width:24.7px;height:30px">法</span></div>
</div>
<div style="left:2486px;top:514px;width:27px;height:4.5px;background:#0f7c1a;"></div>
<div style="left:2486px;top:668px;width:27px;height:4.5px;background:#c29a1d;"></div>
<div style="left:2486px;top:991px;width:27px;height:4.5px;background:#7a7358;"></div>
<div style="left:2486px;top:1226.5px;width:27px;height:4.5px;background:#c29a1d;"></div>
<div style="left:2495px;top:953px;width:16px;height:403px;background:rgba(160,160,160,0.29);"></div>
<div id="t39" class="ui" style="left:17px;top:15.38px;color:#bbbbbb;font-size:22px;font-weight:bold;transform:scaleX(1.0311);">web-ai-project01</div>
<div id="t40" class="ui" style="left:226.4px;top:15.38px;color:#bbbbbb;font-size:22px;font-weight:bold;transform:scaleX(1.0286);">springboot-web-01</div>
<div id="t41" class="ui" style="left:460px;top:15.38px;color:#bbbbbb;font-size:22px;transform:scaleX(0.9888);">src</div>
<div id="t42" class="ui" style="left:517px;top:15.38px;color:#bbbbbb;font-size:22px;transform:scaleX(1.0695);">main</div>
<div id="t43" class="ui" style="left:595px;top:15.38px;color:#bbbbbb;font-size:22px;transform:scaleX(1.0042);">resources</div>
<div id="t44" class="ui" style="left:719px;top:15.38px;color:#bbbbbb;font-size:22px;transform:scaleX(1.0709);">static</div>
<svg style="left:202.6px;top:13px;" width="12" height="32" viewBox="0 0 12 32"><path d="M1.2,1.6 L9.6,15.6 L1.2,29.6" fill="none" stroke="#5d6265" stroke-width="1.5"/></svg>
<svg style="left:437.7px;top:13px;" width="12" height="32" viewBox="0 0 12 32"><path d="M1.2,1.6 L9.6,15.6 L1.2,29.6" fill="none" stroke="#5d6265" stroke-width="1.5"/></svg>
<svg style="left:494.5px;top:13px;" width="12" height="32" viewBox="0 0 12 32"><path d="M1.2,1.6 L9.6,15.6 L1.2,29.6" fill="none" stroke="#5d6265" stroke-width="1.5"/></svg>
<svg style="left:572.5px;top:13px;" width="12" height="32" viewBox="0 0 12 32"><path d="M1.2,1.6 L9.6,15.6 L1.2,29.6" fill="none" stroke="#5d6265" stroke-width="1.5"/></svg>
<svg style="left:696.8px;top:13px;" width="12" height="32" viewBox="0 0 12 32"><path d="M1.2,1.6 L9.6,15.6 L1.2,29.6" fill="none" stroke="#5d6265" stroke-width="1.5"/></svg>
<svg style="left:778.5px;top:13px;" width="12" height="32" viewBox="0 0 12 32"><path d="M1.2,1.6 L9.6,15.6 L1.2,29.6" fill="none" stroke="#5d6265" stroke-width="1.5"/></svg>
<svg style="left:797.8px;top:15px;" width="30" height="30" viewBox="0 0 30 30"><path d="M11.8,0 H22.8 V12.8 H3.8 V8.3 H11.8 Z" fill="#87939a"/><path d="M4.1,7 L10.6,0.5 V7 Z" fill="#87939a"/><rect x="0" y="15.1" width="28.3" height="13" fill="#579943"/><path d="M4.7,18 V26 M10.3,18 V26 M4.7,21.9 H10.3" fill="none" stroke="#2a5520" stroke-width="1.8"/></svg>
<div id="t45" class="ui" style="left:832px;top:15.38px;color:#bbbbbb;font-size:22px;transform:scaleX(1.0319);">user2.html</div>
<svg style="left:1556px;top:15px;" width="30" height="26" viewBox="0 0 30 26"><circle cx="17.6" cy="8.2" r="5.6" fill="#8c8f91"/><path d="M8.6,23.6 C8.6,16.6 13,14.4 17.6,14.4 C22.4,14.4 26.8,16.6 26.8,23.6 Z" fill="#8c8f91"/><circle cx="10.6" cy="8.8" r="6" fill="#afb1b3" stroke="#3c3f41" stroke-width="1.2"/><path d="M0.8,23.6 C0.8,16.6 5.4,14.6 10.6,14.6 C15.8,14.6 20.4,16.6 20.4,23.6 Z" fill="#afb1b3" stroke="#3c3f41" stroke-width="1.2"/></svg>
<svg style="left:1590px;top:26.8px;" width="13.6" height="7.2" viewBox="0 0 13.6 7.2"><path d="M0,0 H13.6 L6.8,7.2 Z" fill="#a6a8aa"/></svg>
<div style="left:1614px;top:10px;width:1.6px;height:33px;background:#555759;"></div>
<svg style="left:1632px;top:12px;" width="34" height="32" viewBox="0 0 34 32"><path d="M2.1,15.2 L16.9,2.7 L20.4,7.2 L5.6,19.8 Z" fill="#499c54"/><path d="M12.6,11.2 L30.6,25.4 L26.4,29.6 L8.6,15 Z" fill="#499c54"/></svg>
<div style="left:1685px;top:7px;width:403px;height:41px;box-sizing:border-box;border:1.6px solid #5e6163;border-radius:6px;"></div>
<svg style="left:1702.8px;top:12.8px;" width="32" height="32" viewBox="0 0 32 32"><path d="M24.5,3.8 C22.5,7.5 20,9.6 13.6,10.6 C8,11.4 0.8,13 0.8,18.8 C0.8,21.4 1.4,23.2 2.6,24.6 L10.6,23.9 L18,14 L27.2,13.6 C27.4,9.4 26,6 24.5,3.8 Z" fill="#55933e"/><path d="M5.8,26.5 C8,25.6 10.4,24.9 12.4,24.7 L12.4,27 C10,27.3 8,27.1 5.8,26.5 Z" fill="#55933e"/><polygon points="29.08,22.44 24.81,29.84 16.26,29.84 11.98,22.44 16.25,15.04 24.81,15.04" fill="#a0acb6" stroke="#3c3f41" stroke-width="2.6" paint-order="stroke" stroke-linejoin="round"/><circle cx="20.53" cy="23.040000000000003" r="4.02" fill="none" stroke="#2f3133" stroke-width="1.5"/><rect x="18.93" y="16.80" width="3.2" height="5.30" fill="#a0acb6"/><rect x="19.78" y="17.14" width="1.5" height="4.79" fill="#2f3133"/><circle cx="26.6" cy="26.2" r="4.6" fill="#3c3f41"/><circle cx="26.6" cy="26.2" r="3.6" fill="#22d321"/></svg>
<div id="t46" class="ui" style="left:1742px;top:14.84px;color:#bbbbbb;font-size:22.4px;transform:scaleX(1.0264);">SpringbootWeb01Application</div>
<svg style="left:2053px;top:24px;" width="16.6" height="9.4" viewBox="0 0 16.6 9.4"><path d="M0,0 H16.6 L8.3,9.4 Z" fill="#a6a8aa"/></svg>
<svg style="left:2110px;top:13px;" width="30" height="30" viewBox="0 0 30 30"><path d="M13.6,27.4 A9.4,9.4 0 1 1 13.6,8.6 H17" fill="none" stroke="#499c54" stroke-width="3.6"/><path d="M16.6,1.6 L26.8,8.6 L16.6,15.6 Z" fill="#499c54"/><rect x="15" y="19" width="9.4" height="9.2" fill="#afb1b3"/></svg>
<svg style="left:2161px;top:13px;" width="26" height="30" viewBox="0 0 26 30"><path d="M7.4,2.6 L11,6.4 M18.4,2.6 L14.8,6.4" stroke="#499c54" stroke-width="2.4" fill="none"/><path d="M12.9,5.6 C18.4,5.6 21,9.6 21,16 C21,23.6 17.6,28 12.9,28 C8.2,28 4.8,23.6 4.8,16 C4.8,9.6 7.4,5.6 12.9,5.6 Z" fill="#499c54"/><path d="M1.6,11.4 H24.2 M1.6,17.4 H24.2 M1.6,23.4 H24.2" stroke="#499c54" stroke-width="3.2"/><path d="M8.6,14.4 H17.2 M8.6,20.4 H17.2" stroke="#3c3f41" stroke-width="2.7"/></svg>
<svg style="left:2210px;top:15px;" width="32" height="30" viewBox="0 0 32 30"><path d="M11.4,1.6 V24 C5,20.6 1.6,15.6 1.6,9.6 V4.6 Z" fill="#afb1b3"/><path d="M11.4,2.8 L19.6,5.4 V10.4 M15.4,20.6 L11.4,22.8" fill="none" stroke="#afb1b3" stroke-width="2.3"/><path d="M17,10.6 L30,19.4 L17,28.2 Z" fill="#499c54"/></svg>
<svg style="left:2262px;top:15px;" width="32" height="30" viewBox="0 0 32 30"><path d="M17.6,21.4 A10,10 0 1 1 21.6,10.2" fill="none" stroke="#afb1b3" stroke-width="2.4"/><path d="M12.4,5.6 V12.6 L8.6,16" fill="none" stroke="#afb1b3" stroke-width="2.2"/><path d="M15.6,10.6 L28.8,19.4 L15.6,28.2 Z" fill="#499c54"/></svg>
<svg style="left:2305px;top:25px;" width="14.8" height="7.4" viewBox="0 0 14.8 7.4"><path d="M0,0 H14.8 L7.4,7.4 Z" fill="#a6a8aa"/></svg>
<div style="left:2346.5px;top:18.5px;width:19px;height:19px;background:#c75450;"></div>
<div style="left:2387.4px;top:10px;width:1.6px;height:34px;background:#555759;"></div>
<svg style="left:2404px;top:11px;" width="34" height="34" viewBox="0 0 34 34"><circle cx="14.6" cy="14" r="9" fill="none" stroke="#afb1b3" stroke-width="3.4"/><path d="M21,20.6 L30.4,29.6" stroke="#afb1b3" stroke-width="4"/></svg>
<svg style="left:2457px;top:12px;" width="32" height="32" viewBox="0 0 32 32"><circle cx="16" cy="16" r="15.2" fill="#f0a732"/><path d="M16,23.6 V10.6 M9.6,15.6 L16,9 L22.4,15.6" fill="none" stroke="#ffffff" stroke-width="3.2"/></svg>
<div style="left:2508.5px;top:15px;width:10px;height:26px;border-radius:13px 0 0 13px;background:linear-gradient(180deg,#8fd14f,#e8d44d 40%,#9b6fd0 75%,#5fa8e8);"></div>
<svg style="left:58px;top:68.6px;" width="27" height="25" viewBox="0 0 27 25"><rect x="0" y="0" width="26.4" height="24.2" fill="#87939a"/><rect x="1.9" y="5.4" width="22.6" height="16.9" fill="#3c3f41"/><rect x="3.6" y="7.2" width="19.2" height="13.4" fill="#3e89a6"/></svg>
<div id="t47" class="ui" style="left:91.6px;top:67.58px;color:#bbbbbb;font-size:22px;"><span class="cu" style="width:20.7px;height:30px">项</span><span class="cu" style="width:20.7px;height:30px">目</span></div>
<svg style="left:163.6px;top:78px;" width="16.6" height="9.6" viewBox="0 0 16.6 9.6"><path d="M0,0 H16.6 L8.3,9.6 Z" fill="#afb1b3"/></svg>
<svg style="left:334px;top:67px;" width="30" height="30" viewBox="0 0 30 30"><circle cx="15" cy="15" r="11.5" fill="none" stroke="#afb1b3" stroke-width="3.3"/><path d="M15,4 V11 M15,19 V26 M4,15 H11 M19,15 H26" stroke="#afb1b3" stroke-width="3.6"/></svg>
<svg style="left:388px;top:68px;" width="24" height="28" viewBox="0 0 24 28"><rect x="0.7" y="1" width="22.6" height="3.8" fill="#afb1b3"/><rect x="0.7" y="23.4" width="22.6" height="3.8" fill="#afb1b3"/><path d="M5.8,12 H18.4 L12.1,6.8 Z M5.8,16 H18.4 L12.1,21.4 Z" fill="#afb1b3"/></svg>
<svg style="left:439px;top:68px;" width="24" height="28" viewBox="0 0 24 28"><rect x="0.8" y="12" width="22.6" height="4" fill="#afb1b3"/><path d="M5.8,2.8 H18.4 L12.1,9 Z M5.8,25.4 H18.4 L12.1,19.2 Z" fill="#afb1b3"/></svg>
<div style="left:482.2px;top:64px;width:1.6px;height:34px;background:#555759;"></div>
<svg style="left:503px;top:68px;" width="28" height="28" viewBox="0 0 28 28"><path d="M10.64,3.00 L17.36,3.00 L16.40,6.16 L19.59,8.00 L21.84,5.59 L25.21,11.41 L21.99,12.16 L21.99,15.84 L25.21,16.59 L21.84,22.41 L19.59,20.00 L16.40,21.84 L17.36,25.00 L10.64,25.00 L11.60,21.84 L8.41,20.00 L6.16,22.41 L2.79,16.59 L6.01,15.84 L6.01,12.16 L2.79,11.41 L6.16,5.59 L8.41,8.00 L11.60,6.16 Z" fill="#afb1b3" stroke="#afb1b3" stroke-width="1.4" stroke-linejoin="round"/><circle cx="14" cy="14" r="4" fill="#3c3f41"/></svg>
<div style="left:556.8px;top:80px;width:22.6px;height:4px;background:#afb1b3;"></div>
<div style="left:0px;top:56px;width:32px;height:102px;background:#2d2f30;"></div>
<div style="left:-5.8px;top:80.4px;width:38.8px;height:26px;line-height:26px;font-size:19.4px;color:#dcdcdc;white-space:pre;transform:rotate(-90deg);"><span class="cu" style="width:19.4px;height:26px">项</span><span class="cu" style="width:19.4px;height:26px">目</span></div>
<svg style="left:2px;top:121px;" width="24" height="20" viewBox="0 0 24 20"><path d="M0.4,0.6 H8.6 L11.8,4.2 H21.4 V17.4 H0.4 Z" fill="#afb1b3"/></svg>
<div style="left:-7.0px;top:1214.0px;width:40px;height:26px;line-height:26px;font-size:20px;color:#bbbbbb;white-space:pre;transform:rotate(-90deg);"><span class="cu" style="width:20px;height:26px">书</span><span class="cu" style="width:20px;height:26px">签</span></div>
<svg style="left:3.6px;top:1255px;" width="20" height="22" viewBox="0 0 20 22"><path d="M0.4,0 H17.6 V20.6 L9,12.2 L0.4,20.6 Z" fill="#afb1b3"/></svg>
<div style="left:-7.6px;top:1321.0px;width:41.2px;height:26px;line-height:26px;font-size:20.6px;color:#bbbbbb;white-space:pre;transform:rotate(-90deg);"><span class="cu" style="width:20.6px;height:26px">结</span><span class="cu" style="width:20.6px;height:26px">构</span></div>
<svg style="left:1421.6px;top:122px;" width="23" height="21" viewBox="0 0 23 21"><path d="M11.2,0.6 L22,20.4 H0.4 Z" fill="#d0a11e"/><rect x="9.1" y="6.9" width="4.2" height="6.3" fill="#2b2b2b"/><rect x="9.1" y="15.2" width="4.2" height="3.2" fill="#2b2b2b"/></svg>
<div id="t48" class="ui" style="left:1449.6px;top:120.17px;color:#a9b7c6;font-size:22.6px;">2</div>
<svg style="left:1479.5px;top:125.99999999999999px;" width="19" height="12.4" viewBox="0 0 19 12.4"><path d="M2,10.4 L9.5,3 L17,10.4" fill="none" stroke="#a9acae" stroke-width="2.5"/></svg>
<svg style="left:1519.5px;top:127.80000000000001px;" width="19" height="12.4" viewBox="0 0 19 12.4"><path d="M2,2 L9.5,9.4 L17,2" fill="none" stroke="#a9acae" stroke-width="2.5"/></svg>
<div style="left:2262px;top:111.7px;width:251px;height:44px;background:#2b2b2b;"></div>
<svg style="left:2271px;top:122px;" width="23" height="21" viewBox="0 0 23 21"><path d="M11.2,0.6 L22,20.4 H0.4 Z" fill="#d0a11e"/><rect x="9.1" y="6.9" width="4.2" height="6.3" fill="#2b2b2b"/><rect x="9.1" y="15.2" width="4.2" height="3.2" fill="#2b2b2b"/></svg>
<div id="t49" class="ui" style="left:2299px;top:120.17px;color:#a9b7c6;font-size:22.6px;">2</div>
<svg style="left:2326.6px;top:122px;" width="23" height="21" viewBox="0 0 23 21"><path d="M11.2,0.6 L22,20.4 H0.4 Z" fill="#7d745a"/><rect x="9.1" y="6.9" width="4.2" height="6.3" fill="#2b2b2b"/><rect x="9.1" y="15.2" width="4.2" height="3.2" fill="#2b2b2b"/></svg>
<div id="t50" class="ui" style="left:2355.2px;top:120.17px;color:#a9b7c6;font-size:22.6px;">2</div>
<svg style="left:2380px;top:122px;" width="26" height="26" viewBox="0 0 26 26"><path d="M3.4,9.6 L10,16.2 L22.4,2.6" fill="none" stroke="#45a659" stroke-width="5"/><path d="M2.4,23.5 L6,19.3 L10.2,23.5 L14.4,19.3 L18.6,23.5 L22.8,18.8" fill="none" stroke="#d9534f" stroke-width="1.7"/></svg>
<div id="t51" class="ui" style="left:2410.4px;top:120.17px;color:#a9b7c6;font-size:22.6px;">1</div>
<svg style="left:2439.5px;top:125.99999999999999px;" width="19" height="12.4" viewBox="0 0 19 12.4"><path d="M2,10.4 L9.5,3 L17,10.4" fill="none" stroke="#a9acae" stroke-width="2.5"/></svg>
<svg style="left:2480.1px;top:127.80000000000001px;" width="19" height="12.4" viewBox="0 0 19 12.4"><path d="M2,2 L9.5,9.4 L17,2" fill="none" stroke="#a9acae" stroke-width="2.5"/></svg>
<div style="left:1103px;top:167px;width:213px;height:54px;background:#3c3f41;border-radius:6px;"></div>
<svg style="left:1117px;top:178px;" width="34" height="34" viewBox="0 0 34 34"><path d="M1,12 L8,2 L20,1 L16,14 Z" fill="#fc801d"/><path d="M1,12 L10,16 L9,31 L3,25 Z" fill="#fe2857"/><path d="M9,31 L14,33 L24,27 L18,20 Z" fill="#b345f1"/><path d="M20,1 L31,9 L32,25 L24,30 L17,18 Z" fill="#087cfa"/><path d="M20,1 L31,9 L26,14 Z" fill="#07c3f2"/><rect x="7" y="6.6" width="18.6" height="18.6" fill="#0b0b0d"/><path d="M9.6,9.6 H13.6 M11.6,9.6 V15.4 M9.6,15.4 H13.6 M18.4,9.6 V14 Q18.4,15.6 16.8,15.6 Q15.8,15.6 15.2,14.8" fill="none" stroke="#ffffff" stroke-width="1.3"/><rect x="9.4" y="20.6" width="7" height="1.4" fill="#ffffff"/></svg>
<svg style="left:1171px;top:181px;" width="28" height="28" viewBox="0 0 28 28"><circle cx="13.6" cy="13.4" r="13" fill="#db4437"/><path d="M13.6,13.4 L2.4,6.8 A13,13 0 0 0 9.2,25.6 Z" fill="#0f9d58"/><path d="M13.6,13.4 L2.4,6.9 A13,13 0 0 0 8.4,25.3 L14.5,14.6 Z" fill="#0f9d58"/><path d="M13.6,13.4 L26.2,13.4 A13,13 0 0 1 9,25.6 Z" fill="#ffcd40"/><path d="M13.6,7.4 H25.2 A13,13 0 0 1 8.6,25.4 L15,14 Z" fill="#ffcd40"/><circle cx="13.6" cy="13.4" r="6.4" fill="#f1f1f1"/><circle cx="13.6" cy="13.4" r="5" fill="#4285f4"/></svg>
<svg style="left:1220px;top:178px;" width="32" height="32" viewBox="0 0 32 32"><defs><radialGradient id="ffg" cx="0.62" cy="0.2" r="0.95"><stop offset="0" stop-color="#fff36b"/><stop offset="0.35" stop-color="#ffbd2f"/><stop offset="0.65" stop-color="#ff6a2a"/><stop offset="1" stop-color="#e31587"/></radialGradient></defs><path d="M20,0.6 C22,4 26.6,6 28.6,11 C31,18 27.6,28.8 16,29.6 C6,29.8 1,22.6 1.4,15.4 C1.6,11 3.4,8.6 5.4,6.4 C5.4,8 6,9.4 7,10 C8.4,6.6 12.6,6 13.6,3 C14.6,4 15,5.6 15,6.6 C17.4,5.6 19.6,3.6 20,0.6 Z" fill="url(#ffg)"/><circle cx="15.4" cy="17.6" r="7.2" fill="#7a3fd1"/><path d="M8,14 C10,11.6 14,11.6 16.6,13 C14,13.6 12.6,15 12.6,16.6 C10.6,16.6 9,15.6 8,14 Z" fill="#ff9a2e"/></svg>
<svg style="left:1272px;top:180px;" width="30" height="30" viewBox="0 0 30 30"><defs><linearGradient id="edg" x1="0" y1="0" x2="1" y2="1"><stop offset="0" stop-color="#35c1f1"/><stop offset="0.55" stop-color="#1b9de2"/><stop offset="1" stop-color="#0c59a4"/></linearGradient><linearGradient id="edg2" x1="0" y1="0" x2="1" y2="0"><stop offset="0" stop-color="#2fb5e8"/><stop offset="1" stop-color="#62d66b"/></linearGradient></defs><circle cx="14" cy="14" r="13.2" fill="url(#edg)"/><path d="M1,12.6 C2,5.6 7.6,0.8 14.4,0.8 C22,0.8 27.2,6.6 27.2,12.6 C27.2,16.6 24,18.6 21,18.6 C18,18.6 17,17.4 17.6,16.4 C18.4,15.4 18.6,14.4 18.4,13 C18,10 15.4,8 12.4,8 C7,8 2.4,10 1,12.6 Z" fill="url(#edg2)"/><path d="M9.6,13 C7,16 7.6,22 13,25.6 C17,27.6 22,26.6 25,23 C22,24.6 17,24.6 14,21.6 C11,18.6 11,15 12.6,13 Z" fill="#0c59a4"/></svg>
<div style="left:1346px;top:167px;width:111px;height:54px;background:#3d4043;border-radius:6px;"></div>
<svg style="left:1360px;top:178px;" width="36" height="34" viewBox="0 0 36 34"><path d="M0.74,19.14 C0.74,11.90 3.13,6.33 6.71,4.73 C9.90,3.34 13.88,3.54 17.46,5.13 C19.45,5.93 21.44,5.73 22.43,4.73 C23.43,3.54 23.43,1.95 21.83,1.75 C20.64,1.75 20.24,2.94 19.65,3.46 L18.57,2.58 C19.25,1.07 21.04,0.48 22.71,0.91 C25.18,1.55 25.89,4.34 25.10,7.20 C24.30,9.99 21.83,11.98 18.65,12.53 C15.87,12.93 13.56,14.28 12.36,16.67 L11.17,19.14 L8.70,19.14 C8.30,17.47 6.71,16.75 5.52,17.47 C4.72,17.95 4.17,18.50 3.77,19.14 Z" fill="#b9bbbd"/><path d="M5.32,7.72 C5.92,9.91 8.70,11.10 11.69,8.32" fill="none" stroke="#3d4043" stroke-width="1"/><circle cx="17.46" cy="8.39" r="0.8" fill="#3d4043"/><path d="M29.20,21.65 A6.96,6.96 0 0 0 17.86,17.47" fill="none" stroke="#35a0da" stroke-width="2.7"/><path d="M16.06,23.83 A6.96,6.96 0 0 0 27.01,27.22" fill="none" stroke="#35a0da" stroke-width="2.7"/><path d="M14.75,15.68 L14.75,21.92 L21.12,21.92 Z M30.67,23.44 L30.67,29.80 L24.30,23.44 Z" fill="#35a0da"/></svg>
<svg style="left:1420.2px;top:187.2px;" width="16" height="16" viewBox="0 0 16 16"><path d="M0.6,0.6 L13.4,13.4 M13.4,0.6 L0.6,13.4" stroke="#646a6d" stroke-width="2" fill="none"/></svg>
<div style="left:2306px;top:167px;width:111px;height:54px;background:#3d4043;border-radius:6px;"></div>
<svg style="left:2320px;top:178px;" width="36" height="34" viewBox="0 0 36 34"><path d="M0.74,19.14 C0.74,11.90 3.13,6.33 6.71,4.73 C9.90,3.34 13.88,3.54 17.46,5.13 C19.45,5.93 21.44,5.73 22.43,4.73 C23.43,3.54 23.43,1.95 21.83,1.75 C20.64,1.75 20.24,2.94 19.65,3.46 L18.57,2.58 C19.25,1.07 21.04,0.48 22.71,0.91 C25.18,1.55 25.89,4.34 25.10,7.20 C24.30,9.99 21.83,11.98 18.65,12.53 C15.87,12.93 13.56,14.28 12.36,16.67 L11.17,19.14 L8.70,19.14 C8.30,17.47 6.71,16.75 5.52,17.47 C4.72,17.95 4.17,18.50 3.77,19.14 Z" fill="#b9bbbd"/><path d="M5.32,7.72 C5.92,9.91 8.70,11.10 11.69,8.32" fill="none" stroke="#3d4043" stroke-width="1"/><circle cx="17.46" cy="8.39" r="0.8" fill="#3d4043"/><path d="M29.20,21.65 A6.96,6.96 0 0 0 17.86,17.47" fill="none" stroke="#35a0da" stroke-width="2.7"/><path d="M16.06,23.83 A6.96,6.96 0 0 0 27.01,27.22" fill="none" stroke="#35a0da" stroke-width="2.7"/><path d="M14.75,15.68 L14.75,21.92 L21.12,21.92 Z M30.67,23.44 L30.67,29.80 L24.30,23.44 Z" fill="#35a0da"/></svg>
<svg style="left:2380.2px;top:187.2px;" width="16" height="16" viewBox="0 0 16 16"><path d="M0.6,0.6 L13.4,13.4 M13.4,0.6 L0.6,13.4" stroke="#646a6d" stroke-width="2" fill="none"/></svg>
<svg style="left:1603.5px;top:693.8px;" width="36" height="36" viewBox="0 0 36 36"><g transform="translate(18,18)"><circle cx="0" cy="0" r="14.3" fill="#55933e"/><path d="M-12.4,-11.3 L13.5,10.6" stroke="#313335" stroke-width="2.4"/><path d="M-2.5,5.3 H7.2 V2.4 L14.3,7.8 L7.2,13.6 V10.4 H-2.5 Z" fill="#9aa7b0" stroke="#313335" stroke-width="3" paint-order="stroke"/></g></svg>
<svg style="left:1603.5px;top:817.3px;" width="36" height="36" viewBox="0 0 36 36"><g transform="translate(18,18)"><circle cx="0" cy="0" r="14.3" fill="#55933e"/><path d="M-12.4,-11.3 L13.5,10.6" stroke="#313335" stroke-width="2.4"/><circle cx="5.9" cy="6.4" r="10.2" fill="#313335"/><circle cx="5.9" cy="6.4" r="8.5" fill="#9aa7b0"/><g transform="translate(5.9,6.4) scale(0.615)"><path d="M-5.6,-2.4 H-0.4 V-6.4 H3.2 L4.6,-9.9 A11.1,11.1 0 0 1 8.95,6.6 L4.6,5.4 L4.2,0 H-5.6 Z" fill="#313335"/><path d="M-10.9,-1.8 L-4,4.6 L-3.4,7.6 L-1.4,9.2 L-1.6,10.9 A11.1,11.1 0 0 1 -10.9,-1.8 Z" fill="#313335"/></g></g></svg>
<svg style="left:1717px;top:734.8px;" width="30" height="32" viewBox="0 0 30 32"><path d="M10.5,2 L14.8,2 L17.2,4.9 L24.4,4.9 L26.8,9.1 L24.4,12.5 L28,18.1 L26,22.5 L22,22.5 L18.8,28.8 L14.4,28.8 L12.4,25.6 L5.3,25.6 L2.9,22 L4.9,18.5 L0.9,12.1 L3.3,8.1 L7.3,8.1 Z" fill="#6f6f6f"/><path d="M11.5,4.2 L8.9,8.6 L10,10.3 L25.2,10.3 M4.6,9.8 L13.2,22.6 L11.8,24 L6.4,24 M14.8,26.8 L21,14.6 L23.4,14.4 L26.6,19.4" fill="none" stroke="#2b2b2b" stroke-width="2.1"/></svg>
<svg style="left:1750.0px;top:745.6px;" width="17" height="11.6" viewBox="0 0 17 11.6"><path d="M2,2 L8.5,8.6 L15,2" fill="none" stroke="#c4c4c4" stroke-width="2.3"/></svg>
<div style="left:1971.5px;top:772.1px;width:55.4px;height:31.8px;background:#393939;border-radius:4.5px;"></div>
<svg style="left:1972.9px;top:773.1999999999999px;" width="30" height="30" viewBox="0 0 30 30"><g transform="translate(15,15)"><circle cx="0" cy="0" r="13.8" fill="#7f8a92"/><path d="M-5.6,-2.4 H-0.4 V-6.4 H3.2 L4.6,-9.9 A11.1,11.1 0 0 1 8.95,6.6 L4.6,5.4 L4.2,0 H-5.6 Z" fill="#393939"/><path d="M-10.9,-1.8 L-4,4.6 L-3.4,7.6 L-1.4,9.2 L-1.6,10.9 A11.1,11.1 0 0 1 -10.9,-1.8 Z" fill="#393939"/></g></svg>
<svg style="left:2003px;top:779.3px;" width="24" height="18" viewBox="0 0 24 18"><path d="M3.6,4.4 L12,12 L20.4,4.4" fill="none" stroke="#7f8a92" stroke-width="3.1" stroke-linecap="round" stroke-linejoin="round"/></svg>
<div style="left:617px;top:62.6px;width:213px;height:42.199999999999996px;box-sizing:border-box;border:5.2px solid #ec1c24;border-radius:3px;"></div>
<div style="left:244px;top:1236px;width:267px;height:36px;box-sizing:border-box;border:4.8px solid #ec1c24;border-radius:3px;"></div>
<div style="left:771px;top:504px;width:341px;height:77px;box-sizing:border-box;border:5.2px solid #ec1c24;border-radius:3px;"></div>
<div style="left:2028px;top:744px;width:192px;height:80.60000000000002px;box-sizing:border-box;border:5.2px solid #ec1c24;border-radius:3px;"></div>
</div></body></html>
